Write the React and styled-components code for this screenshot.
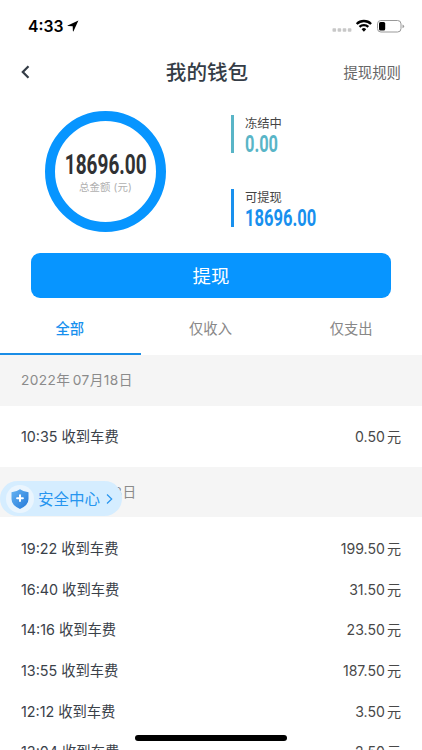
import React from "react";
import styled, { createGlobalStyle } from "styled-components";

const GlobalStyle = createGlobalStyle`
  * { box-sizing: border-box; }
  html, body { margin: 0; padding: 0; background: #fff; }
  body {
    overflow: hidden;
    font-family: Inter, "Noto Sans CJK SC", sans-serif;
    color: #3a4149;
  }
  button { font: inherit; border: 0; background: none; padding: 0; color: inherit; }
`;

const Screen = styled.main`
  position: relative;
  width: 422px;
  height: 750px;
  overflow: hidden;
  background: #fff;
  display: flex;
  flex-direction: column;
`;

const StatusBar = styled.div`
  flex: none;
  height: 50px;
  padding: 1px 17px 0 28px;
  display: flex;
  align-items: center;
  justify-content: space-between;
`;

const Clock = styled.div`
  padding-top: 1px;
  display: flex;
  align-items: center;
  gap: 4px;
  font-size: 15.7px;
  font-weight: 600;
  color: #000;
`;

const StatusIcons = styled.div`
  display: flex;
  align-items: center;
  svg { display: block; }
`;

const NavBar = styled.header`
  flex: none;
  height: 44px;
  padding: 0 21px;
  display: grid;
  grid-template-columns: 1fr auto 1fr;
  align-items: center;
`;

const BackButton = styled.button`
  justify-self: start;
  display: flex;
`;

const Title = styled.h1`
  margin: 0;
  padding: 2px 8px 0 0;
  font-size: 20.6px;
  line-height: 30px;
  font-weight: 500;
  color: #343c46;
`;

const RulesLink = styled.button`
  justify-self: end;
  padding-top: 1px;
  font-size: 14.4px;
  line-height: 22px;
  color: #666;
`;

const Summary = styled.section`
  flex: none;
  height: 159px;
  padding: 17px 0 0 45px;
  display: flex;
  align-items: flex-start;
`;

const Ring = styled.div`
  width: 121px;
  height: 121px;
  border: 10.5px solid #0795ff;
  border-radius: 50%;
  display: flex;
  flex-direction: column;
  align-items: center;
  padding-top: 29px;
`;

const Amount = styled.span`
  display: block;
  width: max-content;
  font-family: Roboto, sans-serif;
  font-size: ${(p) => p.$size}px;
  font-weight: ${(p) => p.$weight};
  line-height: ${(p) => p.$line}px;
  color: ${(p) => p.$color};
  transform: scaleX(${(p) => p.$squeeze});
  transform-origin: ${(p) => p.$origin || "left"} center;
`;

const RingLabel = styled.span`
  font-size: 10.4px;
  line-height: 16px;
  letter-spacing: 0.1px;
  color: #b0b0b0;
`;

const Balances = styled.div`
  margin: 4px 0 0 65px;
  display: flex;
  flex-direction: column;
  gap: 36px;
`;

const Balance = styled.div`
  height: 38px;
  border-left: 3px solid ${(p) => p.$color};
  padding-left: 11px;
`;

const BalanceLabel = styled.div`
  font-size: 12.3px;
  line-height: 18px;
  color: #444;
`;

const Withdraw = styled.button`
  flex: none;
  height: 45px;
  margin: 0 31px;
  padding-top: 1px;
  border-radius: 9px;
  background: #0795ff;
  color: #fff;
  font-size: 18.4px;
  line-height: 44px;
`;

const Tabs = styled.nav`
  flex: none;
  height: 57px;
  display: grid;
  grid-template-columns: repeat(3, 1fr);
`;

const Tab = styled.button`
  padding: 7px 1px 0 0;
  font-size: 14.3px;
  line-height: 22px;
  font-weight: ${(p) => (p.$active ? 500 : 400)};
  color: ${(p) => (p.$active ? "#1890ee" : "#888")};
  border-bottom: 2px solid ${(p) => (p.$active ? "#1a8de6" : "transparent")};
`;

const DateHeader = styled.h2`
  flex: none;
  margin: 0;
  height: 50.7px;
  padding-left: 21px;
  background: #f5f5f5;
  font-size: 13.7px;
  line-height: 51.5px;
  font-weight: 400;
  letter-spacing: 0.4px;
  word-spacing: -1.8px;
  color: #8b8b8b;
`;

const Entries = styled.ul`
  flex: none;
  margin: 0;
  padding: 11.1px 21px 9.3px;
  list-style: none;
`;

const Entry = styled.li`
  height: 40.7px;
  display: flex;
  justify-content: space-between;
  align-items: center;
  font-size: 14.3px;
  line-height: 22px;
`;

const EntryAmount = styled.span`
  display: flex;
  gap: 2px;
  font-size: 14.1px;
  color: #484848;
`;

const SafetyCenter = styled.button`
  position: absolute;
  left: 0;
  top: 481px;
  width: 122px;
  height: 35px;
  padding-left: 6px;
  display: flex;
  align-items: center;
  border-radius: 18px;
  background: #d5edff;
  color: #2795ef;
  font-size: 15.5px;
  line-height: 24px;
`;

const SafetyLabel = styled.span`
  padding-top: 2px;
`;

const ShieldBadge = styled.span`
  width: 28px;
  height: 28px;
  margin-right: 4px;
  border-radius: 50%;
  background: #eaf5fe;
  display: flex;
  align-items: center;
  justify-content: center;
`;

const Chevron = styled.svg`
  margin-left: 6px;
`;

const HomeIndicator = styled.div`
  position: absolute;
  left: 135px;
  top: 735px;
  width: 152px;
  height: 6px;
  border-radius: 3px;
  background: #000;
`;

const days = [
  { date: "2022年 07月18日", items: [["10:35", "0.50"]] },
  {
    date: "2022年 06月28日",
    items: [
      ["19:22", "199.50"],
      ["16:40", "31.50"],
      ["14:16", "23.50"],
      ["13:55", "187.50"],
      ["12:12", "3.50"],
      ["13:04", "2.50"],
    ],
  },
];

const LocationArrow = () => (
  <svg width="12" height="12" viewBox="0 0 12 12">
    <path d="M11.4.6.7 5.400q-.6.5.2.6l4.800.2.200 4.900q.1.800.6.200Z" fill="#000" />
  </svg>
);

const StatusGlyphs = () => (
  <svg width="74" height="16" viewBox="0 0 74 16">
    <g fill="#c8c8c8">
      <rect x="1.500" y="10.200" width="3.600" height="3.500" rx=".8" />
      <rect x="6.600" y="10.200" width="3.600" height="3.500" rx=".8" />
      <rect x="11.700" y="10.200" width="3.600" height="3.500" rx=".8" />
      <rect x="16.800" y="10.200" width="3.600" height="3.500" rx=".8" />
    </g>
    <g fill="none" stroke="#000" strokeWidth="2.300">
      <path d="M25.700 6a10.200 10.200 0 0 1 14.400 0" />
      <path d="M28.500 8.900a6.200 6.200 0 0 1 8.800 0" />
    </g>
    <path d="M30.600 11.200a3.300 3.300 0 0 1 4.600 0l-2.300 2.500Z" fill="#000" />
    <rect x="46.500" y="2.500" width="23.500" height="11.500" rx="3.400" fill="none" stroke="#999" />
    <rect x="48" y="4" width="6.200" height="8.500" rx="1.600" fill="#000" />
    <path d="M71.500 6.400q1.600.5 1.600 1.900t-1.600 1.900Z" fill="#999" />
  </svg>
);

const Shield = () => (
  <svg width="20" height="22" viewBox="0 0 20 22">
    <defs>
      <linearGradient id="shield" x1="0" y1="0" x2="1" y2="1">
        <stop offset="0" stopColor="#66b4f3" />
        <stop offset="1" stopColor="#2478d8" />
      </linearGradient>
    </defs>
    <path
      d="M10 1.200Q13.500 3.800 18.500 4.200V11q0 6.200-8.500 10Q1.500 17.200 1.500 11V4.200Q6.500 3.800 10 1.200Z"
      fill="url(#shield)"
    />
    <path d="M10 7.300v5.800M7.100 10.200h5.800" stroke="#fff" strokeWidth="2" strokeLinecap="round" />
  </svg>
);

export default function App() {
  return (
    <>
      <GlobalStyle />
      <Screen>
        <StatusBar>
          <Clock>
            4:33
            <LocationArrow />
          </Clock>
          <StatusIcons>
            <StatusGlyphs />
          </StatusIcons>
        </StatusBar>

        <NavBar>
          <BackButton aria-label="返回">
            <svg width="9" height="14" viewBox="0 0 9 14">
              <path d="M7.500 1.200 1.800 7l5.700 5.800" fill="none" stroke="#343c46" strokeWidth="2.200" />
            </svg>
          </BackButton>
          <Title>我的钱包</Title>
          <RulesLink>提现规则</RulesLink>
        </NavBar>

        <Summary>
          <Ring>
            <Amount $size={28.2} $weight={700} $line={30} $color="#303133" $squeeze={0.675} $origin="center">
              18696.00
            </Amount>
            <RingLabel>总金额 (元)</RingLabel>
          </Ring>
          <Balances>
            <Balance $color="#59b5c7">
              <BalanceLabel>冻结中</BalanceLabel>
              <Amount $size={24.5} $weight={700} $line={21} $color="#59b5c7" $squeeze={0.67}>
                0.00
              </Amount>
            </Balance>
            <Balance $color="#1890ee">
              <BalanceLabel>可提现</BalanceLabel>
              <Amount $size={24.5} $weight={700} $line={21} $color="#1890ee" $squeeze={0.675}>
                18696.00
              </Amount>
            </Balance>
          </Balances>
        </Summary>

        <Withdraw>提现</Withdraw>

        <Tabs>
          <Tab $active>全部</Tab>
          <Tab>仅收入</Tab>
          <Tab>仅支出</Tab>
        </Tabs>

        {days.map((day) => (
          <React.Fragment key={day.date}>
            <DateHeader>{day.date}</DateHeader>
            <Entries>
              {day.items.map(([time, amount]) => (
                <Entry key={time}>
                  <span>{time} 收到车费</span>
                  <EntryAmount>
                    <span>{amount}</span>
                    <span>元</span>
                  </EntryAmount>
                </Entry>
              ))}
            </Entries>
          </React.Fragment>
        ))}

        <SafetyCenter>
          <ShieldBadge>
            <Shield />
          </ShieldBadge>
          <SafetyLabel>安全中心</SafetyLabel>
          <Chevron width="7" height="12" viewBox="0 0 7 12">
            <path d="M1 1.500 5.700 6 1 10.500" fill="none" stroke="#2795ef" strokeWidth="1.200" />
          </Chevron>
        </SafetyCenter>
        <HomeIndicator />
      </Screen>
    </>
  );
}
